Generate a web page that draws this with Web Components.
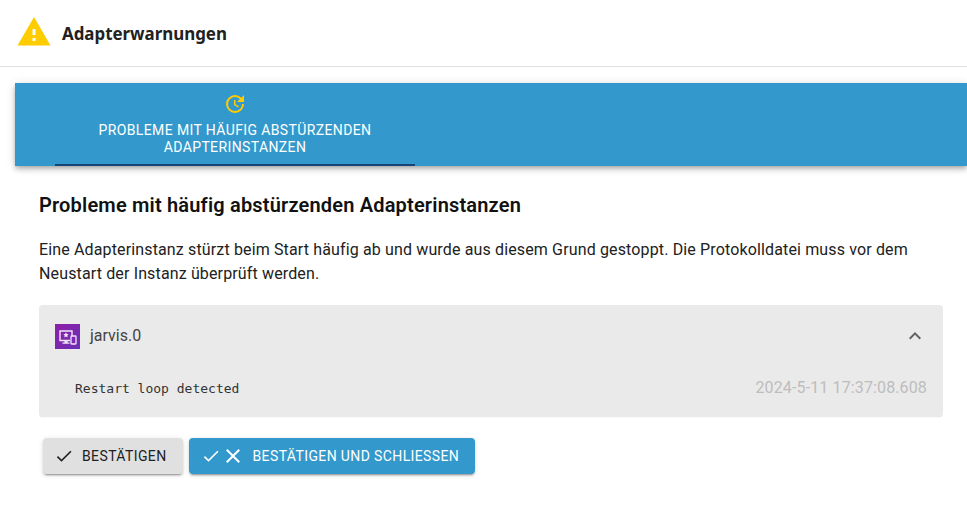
<!DOCTYPE html>
<html lang="de">
<head>
<meta charset="utf-8">
<title>Adapterwarnungen</title>
<style>
    html, body { margin: 0; height: 100%; background: #fff; overflow: hidden; }
    body { font-family: Roboto, "Liberation Sans", sans-serif; }
</style>
</head>
<body>
<dialog-header>Adapterwarnungen</dialog-header>
<tab-bar>
    <tab-item>Probleme mit häufig abstürzenden Adapterinstanzen</tab-item>
</tab-bar>
<problem-section heading="Probleme mit häufig abstürzenden Adapterinstanzen">
    Eine Adapterinstanz stürzt beim Start häufig ab und wurde aus diesem Grund gestoppt. Die Protokolldatei muss vor dem Neustart der Instanz überprüft werden.
    <instance-panel slot="panel" name="jarvis.0" message="Restart loop detected" time="2024-5-11 17:37:08.608"></instance-panel>
    <action-button slot="actions" icons="check">Bestätigen</action-button>
    <action-button slot="actions" icons="check close" primary>Bestätigen und schliessen</action-button>
</problem-section>

<script>
// header with the warning triangle
class DialogHeader extends HTMLElement {
    constructor(){
        super();
        this.attachShadow({ mode: 'open' });
        this.shadowRoot.innerHTML = `
        <style>
            :host{
                display:flex;
                align-items:center;
                gap:11px;
                height:66px;
                padding-left:16px;
                border-bottom:1px solid #e0e0e0;
                box-sizing:content-box;
            }
            svg{ width:36px; height:36px; display:block; margin-top:-2px; }
            span{
                font:700 16.9px "Noto Sans", sans-serif;
                color:#212121;
                margin-left:-1px;
            }
        </style>
        <svg viewBox="0 0 24 24"><path fill="#ffcc00" d="M1 21h22L12 2 1 21zm12-3h-2v-2h2v2zm0-4h-2v-4h2v4z"/></svg>
        <span><slot></slot></span>
        `;
    }
}

class TabBar extends HTMLElement {
    constructor(){
        super();
        this.attachShadow({ mode: 'open' });
        this.shadowRoot.innerHTML = `
        <style>
            :host{
                display:flex;
                height:83px;
                margin:16px 0 0 15px;
                padding-left:40px;
                background:#3399cc;
                box-shadow:0 2px 4px -1px rgba(0,0,0,.2), 0 4px 5px 0 rgba(0,0,0,.14), 0 1px 10px 0 rgba(0,0,0,.12);
            }
        </style>
        <slot></slot>
        `;
    }
}

class TabItem extends HTMLElement {
    constructor(){
        super();
        this.attachShadow({ mode: 'open' });
        this.shadowRoot.innerHTML = `
        <style>
            :host{
                display:flex;
                flex-direction:column;
                align-items:center;
                box-sizing:border-box;
                width:360px;
                height:83px;
                padding-top:9px;
                border-bottom:2px solid #164477;
                font:450 14px/17px Roboto, sans-serif;
                letter-spacing:.38px;
                color:#fff;
                text-align:center;
                text-transform:uppercase;
            }
            svg{ width:24px; height:24px; display:block; margin-bottom:6px; }
            div{ width:300px; }
        </style>
        <svg viewBox="0 0 24 24"><path fill="#ffcc00" d="M11 8v5l4.25 2.52.77-1.28-3.52-2.09V8H11zm10 2V3l-2.64 2.64A8.96 8.96 0 0 0 12 3a9 9 0 1 0 9 9h-2a7 7 0 1 1-7-7c1.93 0 3.68.79 4.95 2.05L14 10h7z"/></svg>
        <div><slot></slot></div>
        `;
    }
}

class ProblemSection extends HTMLElement {
    constructor(){
        super();
        this.attachShadow({ mode: 'open' });
        this.shadowRoot.innerHTML = `
        <style>
            :host{
                display:block;
                padding:26px 24px 0 39px;
                color:#212121;
                font:400 16px/24px Roboto, sans-serif;
                letter-spacing:.14px;
            }
            h2{
                margin:0 0 20px;
                font:600 20px/26px Roboto, sans-serif;
                letter-spacing:.18px;
                color:#111;
            }
            p{ margin:0 0 19px; }
            .actions{ display:flex; gap:6px; margin:21px 0 0 4px; }
        </style>
        <h2 id="heading"></h2>
        <p><slot></slot></p>
        <slot name="panel"></slot>
        <div class="actions"><slot name="actions"></slot></div>
        `;
    }

    connectedCallback(){
        this.shadowRoot.querySelector('#heading').textContent = this.getAttribute('heading');
    }
}

class InstancePanel extends HTMLElement {
    constructor(){
        super();
        this.attachShadow({ mode: 'open' });
        this.shadowRoot.innerHTML = `
        <style>
            :host{
                display:block;
                height:112px;
                box-sizing:border-box;
                background:#eaeaea;
                border-radius:4px;
                box-shadow:0 1px 1px -1px rgba(0,0,0,.3);
                letter-spacing:normal;
            }
            .summary{
                display:flex;
                align-items:center;
                height:62px;
                padding:0 16px;
            }
            .logo{
                width:25px;
                height:25px;
                margin-right:10px;
                display:block;
            }
            .name{ flex:1; color:#444; font-size:16px; }
            .chevron{ width:24px; height:24px; display:block; }
            .row{
                display:flex;
                justify-content:space-between;
                align-items:center;
                height:30px;
                margin-top:6px;
                padding:0 16px 0 36px;
            }
            .message{
                font:13px "DejaVu Sans Mono", "Liberation Mono", monospace;
                color:#333;
            }
            .time{ font-size:16px; color:#bdbdbd; letter-spacing:.13px; }
        </style>
        <div class="summary">
            <svg class="logo" viewBox="0 0 25 25">
                <defs>
                    <linearGradient id="logo-bg" x1="0" y1="0" x2="1" y2="1">
                        <stop offset="0" stop-color="#8e1fa8"/>
                        <stop offset="1" stop-color="#6a2fb5"/>
                    </linearGradient>
                </defs>
                <rect width="25" height="25" fill="url(#logo-bg)"/>
                <path fill="none" stroke="#f1e6f7" stroke-width="1.4" d="M17 14.5V7H5v9.5h10"/>
                <path fill="#f1e6f7" d="M9.5 16.5h3v2h2v1.2h-7v-1.2h2z"/>
                <path fill="#f1e6f7" d="M11 8.2l.8 1.8 1.9.2-1.4 1.3.4 1.9-1.7-1-1.7 1 .4-1.9-1.4-1.3 1.9-.2z"/>
                <rect x="16" y="12" width="5" height="8" rx=".7" fill="#7d28ae" stroke="#f1e6f7" stroke-width="1.3"/>
            </svg>
            <span class="name" id="name"></span>
            <svg class="chevron" viewBox="0 0 24 24"><path fill="#616161" d="M12 8l-6 6 1.41 1.41L12 10.83l4.59 4.58L18 14z"/></svg>
        </div>
        <div class="row">
            <span class="message" id="message"></span>
            <span class="time" id="time"></span>
        </div>
        `;
    }

    connectedCallback(){
        for (const key of ['name', 'message', 'time']){
            this.shadowRoot.querySelector('#' + key).textContent = this.getAttribute(key);
        }
    }
}

const BUTTON_ICONS = {
    check: 'M9 16.17 4.83 12l-1.42 1.41L9 19 21 7l-1.41-1.41z',
    close: 'M19 6.41 17.59 5 12 10.59 6.41 5 5 6.41 10.59 12 5 17.59 6.41 19 12 13.41 17.59 19 19 17.59 13.41 12z'
};

class ActionButton extends HTMLElement {
    constructor(){
        super();
        this.attachShadow({ mode: 'open' });
        this.shadowRoot.innerHTML = `
        <style>
            :host{
                display:inline-flex;
                align-items:center;
                height:36px;
                padding:0 16px 0 11px;
                border-radius:4px;
                background:#e0e0e0;
                color:#212121;
                font:450 14px Roboto, sans-serif;
                letter-spacing:.38px;
                text-transform:uppercase;
                box-shadow:0 3px 1px -2px rgba(0,0,0,.2), 0 2px 2px 0 rgba(0,0,0,.14), 0 1px 5px 0 rgba(0,0,0,.12);
            }
            :host([primary]){
                background:#3399cc;
                color:#fff;
                padding:0 16px 0 12px;
            }
            .icons{ display:flex; margin-right:8px; }
            svg{ width:20px; height:20px; display:block; fill:currentColor; }
            :host([primary]) svg + svg{ width:24px; height:24px; margin:-2px 0 -2px 0; }
        </style>
        <span class="icons"></span>
        <slot></slot>
        `;
    }

    connectedCallback(){
        const icons = this.getAttribute('icons').split(' ');
        this.shadowRoot.querySelector('.icons').innerHTML = icons
            .map(name => `<svg viewBox="0 0 24 24"><path d="${BUTTON_ICONS[name]}"/></svg>`)
            .join('');
    }
}

customElements.define('dialog-header', DialogHeader);
customElements.define('tab-bar', TabBar);
customElements.define('tab-item', TabItem);
customElements.define('problem-section', ProblemSection);
customElements.define('instance-panel', InstancePanel);
customElements.define('action-button', ActionButton);
</script>
</body>
</html>
